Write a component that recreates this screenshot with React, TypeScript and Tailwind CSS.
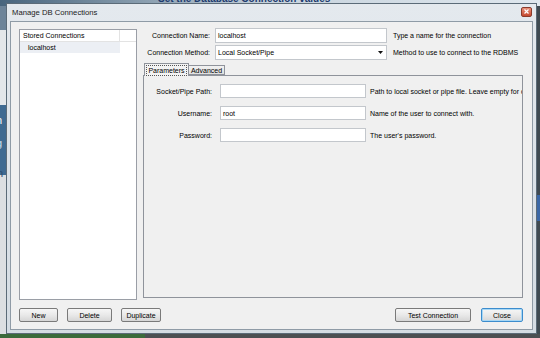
import React from 'react';

const ui = "font-['Liberation_Sans',Arial,sans-serif] text-[7px] leading-none text-black";

export default function App() {
  return (
    <div className={`relative w-[540px] h-[338px] overflow-hidden bg-[#55646f] ${ui}`}>
      <Backdrop />

      {/* Dialog window */}
      <div className="absolute left-[6px] top-[3px] w-[531px] h-[331px] flex flex-col border border-[#5b6b78] bg-gradient-to-b from-[#e4e9ee] to-[#d4dce3] px-[3px] pb-[3px]">
        {/* Title bar */}
        <div className="h-[17px] flex items-center justify-between pl-[2px] pr-[1px]">
          <span className="text-[7.7px] text-[#1b1b1b]">Manage DB Connections</span>
          <div className="w-[11px] h-[10px] mb-[2px] rounded-[2px] border border-[#8a3b2c] bg-gradient-to-b from-[#e8907a] to-[#c4472e] flex items-center justify-center">
            <svg width="5" height="5" viewBox="0 0 5 5">
              <path d="M0.5 0.5 L4.5 4.5 M4.5 0.5 L0.5 4.5" stroke="#fff" strokeWidth="1.2" />
            </svg>
          </div>
        </div>

        {/* Client area */}
        <div className="flex-1 flex flex-col border border-[#8f9ba6] bg-[#f0f0f0] pt-[6px] pb-[7px] pl-[8px] pr-[9px]">
          <div className="flex h-[272px] gap-[6px]">
            {/* Stored connections list */}
            <div className="w-[118px] shrink-0 mt-[1px] border border-[#9a9ea6] bg-white flex flex-col">
              <div className="h-[12px] flex border-b border-[#e3e3e3]">
                <div className="w-[100px] pl-[3px] flex items-center border-r border-[#e3e3e3] whitespace-nowrap">Stored Connections</div>
              </div>
              <div className="h-[11px] w-[100px] bg-[#eceff4] flex items-center pl-[8px]">localhost</div>
            </div>

            {/* Right column */}
            <div className="flex-1 min-w-0 flex flex-col pb-[2px]">
              <FormRow label="Connection Name:" help="Type a name for the connection">
                <div className="w-[172px] h-[15px] shrink-0 border border-[#c3c7cc] bg-white flex items-center pl-[2px]">localhost</div>
              </FormRow>
              <div className="h-[2px]" />
              <FormRow label="Connection Method:" help="Method to use to connect to the RDBMS">
                <div className="w-[172px] h-[15px] shrink-0 border border-[#c3c7cc] bg-white flex items-center justify-between pl-[2px] pr-[3px]">
                  <span>Local Socket/Pipe</span>
                  <svg width="5" height="3" viewBox="0 0 5 3">
                    <path d="M0 0 H5 L2.5 3 Z" fill="#111" />
                  </svg>
                </div>
              </FormRow>

              {/* Tabs */}
              <div className="mt-[3px] h-[12px] flex items-start pl-[1px] relative z-10">
                <div className="h-[13px] w-[45px] border border-b-0 border-[#8f939b] bg-[#f3f3f3] flex items-center justify-center">
                  <span className="border border-dotted border-[#555] px-[1px] py-[1px]">Parameters</span>
                </div>
                <div className="mt-[2px] h-[10px] w-[36px] border border-l-0 border-[#8f939b] bg-gradient-to-b from-[#f2f2f2] to-[#e0e0e0] flex items-center justify-center">
                  Advanced
                </div>
              </div>

              {/* Tab panel */}
              <div className="flex-1 min-w-0 border border-[#8f939b] bg-[#f0f0f0] overflow-hidden pt-[8px] flex flex-col gap-[8px]">
                <PanelRow label="Socket/Pipe Path:" value="" help="Path to local socket or pipe file. Leave empty for default." />
                <PanelRow label="Username:" value="root" help="Name of the user to connect with." />
                <PanelRow label="Password:" value="" help="The user's password." />
              </div>
            </div>
          </div>

          {/* Buttons */}
          <div className="mt-[8px] h-[14px] flex items-center">
            <Btn w="w-[39px]">New</Btn>
            <div className="w-[9px]" />
            <Btn w="w-[45px]">Delete</Btn>
            <div className="w-[9px]" />
            <Btn w="w-[40px]">Duplicate</Btn>
            <div className="flex-1" />
            <Btn w="w-[76px]">Test Connection</Btn>
            <div className="w-[10px]" />
            <Btn w="w-[42px]" primary>Close</Btn>
          </div>
        </div>
      </div>
    </div>
  );
}

function FormRow({ label, help, children }: { label: string; help: string; children: React.ReactNode }) {
  return (
    <div className="h-[15px] flex items-center">
      <div className="w-[67px] shrink-0 text-right whitespace-nowrap">{label}</div>
      <div className="w-[5px] shrink-0" />
      {children}
      <div className="w-[6px] shrink-0" />
      <div className="whitespace-nowrap">{help}</div>
    </div>
  );
}

function PanelRow({ label, value, help }: { label: string; value: string; help: string }) {
  return (
    <div className="h-[14px] flex items-center">
      <div className="w-[68px] shrink-0 text-right whitespace-nowrap">{label}</div>
      <div className="w-[8px] shrink-0" />
      <div className="w-[146px] h-[14px] shrink-0 border border-[#c3c7cc] bg-white flex items-center pl-[2px]">{value}</div>
      <div className="w-[4px] shrink-0" />
      <div className="whitespace-nowrap">{help}</div>
    </div>
  );
}

function Btn({ w, primary, children }: { w: string; primary?: boolean; children: React.ReactNode }) {
  return (
    <div
      className={`${w} shrink-0 h-[14px] rounded-[2px] border flex items-center justify-center whitespace-nowrap bg-gradient-to-b from-[#f6f6f6] via-[#e9e9e9] to-[#d6d6d6] ${
        primary ? 'border-[#3c8ccd] shadow-[inset_0_0_0_1px_#a7d7f5]' : 'border-[#7a7a7a]'
      }`}
    >
      {children}
    </div>
  );
}

function Backdrop() {
  return (
    <>
      {/* window behind, top edge */}
      <div className="absolute left-0 top-0 w-[540px] h-[6px] bg-gradient-to-r from-[#48657d] via-[#c7d3dd] to-[#dfe7ee]" />
      <div className="absolute left-[158px] top-[-6px] text-[10px] font-bold text-[#1d3b6e] underline whitespace-nowrap">
        Set the Database Connection values
      </div>
      {/* left edge */}
      <div className="absolute left-0 top-[6px] w-[6px] h-[24px] bg-[#6d8499]" />
      <div className="absolute left-0 top-[30px] w-[6px] h-[75px] bg-[#e3e7ea]" />
      <div className="absolute left-0 top-[105px] w-[6px] h-[70px] bg-[#3f6a91]" />
      <div className="absolute left-[-4px] top-[115px] text-[11px] text-white">h</div>
      <div className="absolute left-[-4px] top-[138px] text-[11px] text-[#cfe0ee]">g</div>
      <div className="absolute left-0 top-[175px] w-[6px] h-[160px] bg-[#dcdfe2]" />
      <div className="absolute left-[-3px] top-[168px] text-[11px] text-[#2c4e72]">n</div>
      {/* right edge */}
      <div className="absolute right-0 top-[6px] w-[3px] h-[332px] bg-[#3f4a52]" />
      <div className="absolute right-0 top-[195px] w-[3px] h-[26px] bg-[#3a67a6]" />
      {/* bottom edge */}
      <div className="absolute left-0 bottom-0 w-[145px] h-[4px] bg-[#3b6a3b]" />
      <div className="absolute left-[145px] bottom-0 w-[395px] h-[4px] bg-[#4b4f52]" />
    </>
  );
}
